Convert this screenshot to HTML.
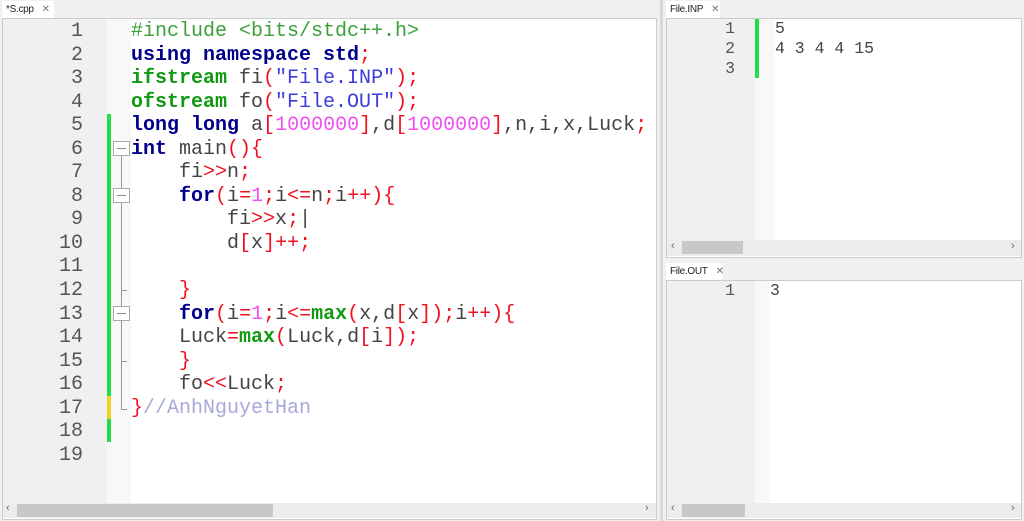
<!DOCTYPE html>
<html><head><style>
*{margin:0;padding:0;box-sizing:border-box}
body{width:1024px;height:521px;background:#f0f0f0;position:relative;overflow:hidden;font-family:"Liberation Sans",sans-serif}
.abs{position:absolute}
.tab{position:absolute;background:#fff;font-size:10px;color:#222;padding:3px 4px;height:18px;letter-spacing:-0.3px}
.tab span{color:#777;margin-left:8px;font-size:10px}
.ln{position:absolute;font-family:"Liberation Mono",monospace;white-space:pre;text-align:right;color:#555}
.code{position:absolute;font-family:"Liberation Mono",monospace;white-space:pre;color:#444}
.k{color:#00008b;font-weight:bold}
.g{color:#109a10;font-weight:bold}
.p{color:#3aa03a}
.r{color:#f01020}
.s{color:#3c3cd8}
.m{color:#f050f0}
.c{color:#a8a8dc}
.sb{position:absolute;background:#ececec}
.th{position:absolute;background:#c8c8c8}
.fold{position:absolute;left:113px;width:17px;height:15px;border:1px solid #aaa;background:#fff}
.fold:after{content:"";position:absolute;left:3px;right:3px;top:6px;border-top:1px solid #888}
</style></head><body>
<div class="abs" style="left:0;top:0;width:660px;height:18px;background:#f0f0f0"></div>
<div class="tab" style="left:2px;top:1px;width:52px">*S.cpp<span>✕</span></div>
<div class="abs" style="left:2px;top:18px;width:655px;height:502px;background:#fff;border:1px solid #ccc"></div>
<div class="abs" style="left:3px;top:19px;width:104px;height:484px;background:#f0f0f0"></div>
<div class="abs" style="left:107px;top:19px;width:24px;height:484px;background:#f8f8f8"></div>
<div class="abs" style="left:107px;top:114px;width:4px;height:282px;background:#22dd44"></div>
<div class="abs" style="left:107px;top:396px;width:4px;height:23px;background:#f0d020"></div>
<div class="abs" style="left:107px;top:419px;width:4px;height:23px;background:#22dd44"></div>
<div class="abs" style="left:121px;top:150px;width:1px;height:260px;background:#999"></div>
<div class="abs" style="left:121px;top:290px;width:6px;height:1px;background:#999"></div>
<div class="abs" style="left:121px;top:361px;width:6px;height:1px;background:#999"></div>
<div class="abs" style="left:121px;top:409px;width:6px;height:1px;background:#999"></div>
<div class="fold" style="top:141px"></div>
<div class="fold" style="top:188px"></div>
<div class="fold" style="top:306px"></div>
<div class="ln" style="left:10px;top:20px;width:73px;font-size:20px;line-height:23.55px">1
2
3
4
5
6
7
8
9
10
11
12
13
14
15
16
17
18
19</div>
<div class="code" style="left:131px;top:20px;font-size:20px;line-height:23.55px"><span class="p">#include &lt;bits/stdc++.h&gt;</span>
<span class="k">using namespace std</span><span class="r">;</span>
<span class="g">ifstream</span> fi<span class="r">(</span><span class="s">"File.INP"</span><span class="r">);</span>
<span class="g">ofstream</span> fo<span class="r">(</span><span class="s">"File.OUT"</span><span class="r">);</span>
<span class="k">long long</span> a<span class="r">[</span><span class="m">1000000</span><span class="r">]</span>,d<span class="r">[</span><span class="m">1000000</span><span class="r">]</span>,n,i,x,Luck<span class="r">;</span>
<span class="k">int</span> main<span class="r">(){</span>
    fi<span class="r">&gt;&gt;</span>n<span class="r">;</span>
    <span class="k">for</span><span class="r">(</span>i<span class="r">=</span><span class="m">1</span><span class="r">;</span>i<span class="r">&lt;=</span>n<span class="r">;</span>i<span class="r">++){</span>
        fi<span class="r">&gt;&gt;</span>x<span class="r">;</span>|
        d<span class="r">[</span>x<span class="r">]++;</span>

    <span class="r">}</span>
    <span class="k">for</span><span class="r">(</span>i<span class="r">=</span><span class="m">1</span><span class="r">;</span>i<span class="r">&lt;=</span><span class="g">max</span><span class="r">(</span>x,d<span class="r">[</span>x<span class="r">]);</span>i<span class="r">++){</span>
    Luck<span class="r">=</span><span class="g">max</span><span class="r">(</span>Luck,d<span class="r">[</span>i<span class="r">]);</span>
    <span class="r">}</span>
    fo<span class="r">&lt;&lt;</span>Luck<span class="r">;</span>
<span class="r">}</span><span class="c">//AnhNguyetHan</span></div>
<div class="sb" style="left:3px;top:503px;width:653px;height:15px"></div>
<div class="th" style="left:17px;top:504px;width:256px;height:13px"></div>
<div class="abs" style="left:6px;top:502px;font-size:11px;color:#666">‹</div>
<div class="abs" style="left:645px;top:502px;font-size:11px;color:#666">›</div>
<div class="abs" style="left:660px;top:0;width:3px;height:521px;background:#d8d8d8"></div>
<div class="tab" style="left:666px;top:1px;width:54px">File.INP<span>✕</span></div>
<div class="abs" style="left:666px;top:18px;width:356px;height:240px;background:#fff;border:1px solid #ccc"></div>
<div class="abs" style="left:667px;top:19px;width:88px;height:221px;background:#f0f0f0"></div>
<div class="abs" style="left:755px;top:19px;width:19px;height:221px;background:#f8f8f8"></div>
<div class="abs" style="left:755px;top:19px;width:4px;height:59px;background:#22dd44"></div>
<div class="ln" style="left:680px;top:19px;width:55px;font-size:16.5px;line-height:20px">1
2
3</div>
<div class="code" style="left:775px;top:19px;font-size:16.5px;line-height:20px">5
4 3 4 4 15</div>
<div class="sb" style="left:667px;top:240px;width:354px;height:16px"></div>
<div class="th" style="left:682px;top:241px;width:61px;height:13px"></div>
<div class="abs" style="left:671px;top:240px;font-size:11px;color:#666">‹</div>
<div class="abs" style="left:1011px;top:240px;font-size:11px;color:#666">›</div>
<div class="tab" style="left:666px;top:263px;width:56px">File.OUT<span>✕</span></div>
<div class="abs" style="left:666px;top:280px;width:356px;height:240px;background:#fff;border:1px solid #ccc"></div>
<div class="abs" style="left:667px;top:281px;width:88px;height:222px;background:#f0f0f0"></div>
<div class="abs" style="left:755px;top:281px;width:14px;height:222px;background:#f8f8f8"></div>
<div class="ln" style="left:680px;top:281px;width:55px;font-size:16.5px;line-height:20px">1</div>
<div class="code" style="left:770px;top:281px;font-size:16.5px;line-height:20px">3</div>
<div class="sb" style="left:667px;top:503px;width:354px;height:15px"></div>
<div class="th" style="left:682px;top:504px;width:63px;height:13px"></div>
<div class="abs" style="left:671px;top:502px;font-size:11px;color:#666">‹</div>
<div class="abs" style="left:1011px;top:502px;font-size:11px;color:#666">›</div>
</body></html>
